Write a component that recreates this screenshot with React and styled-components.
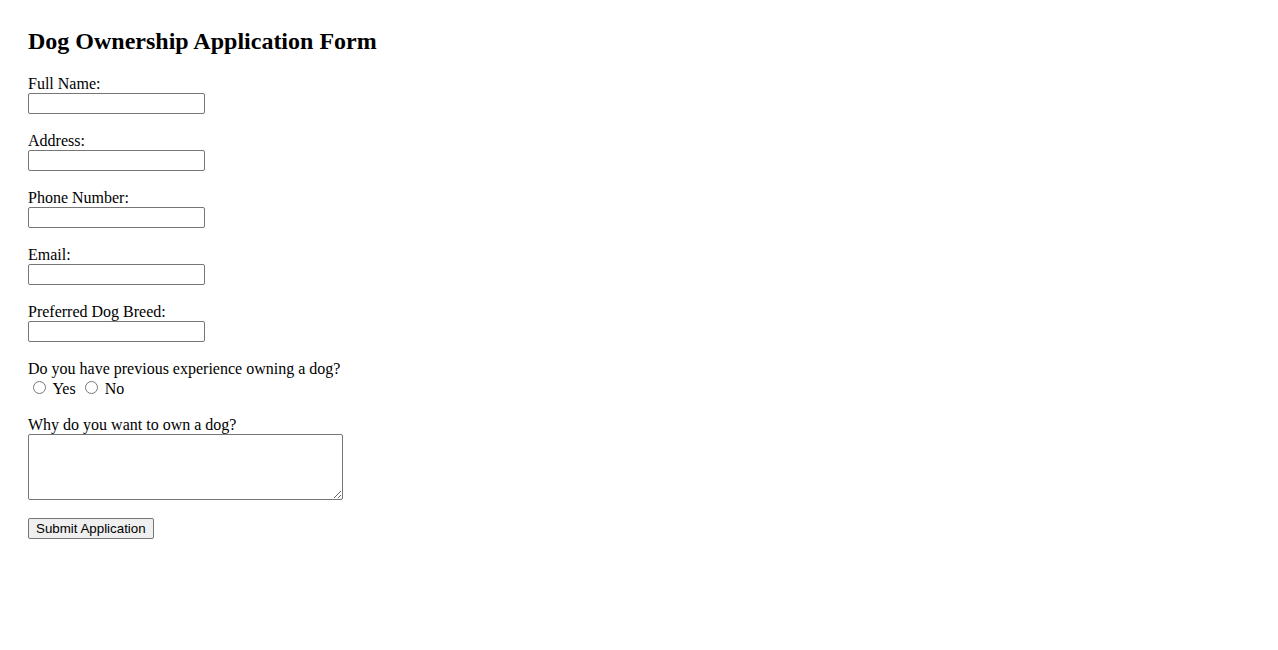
import React from 'react';
import styled, { createGlobalStyle } from 'styled-components';

const GlobalStyle = createGlobalStyle`
 body {
    margin: 8px;
    padding: 20px;
    font-family: "Liberation Serif", "Times New Roman", serif;
    font-size: 16px;
    color: #000;
    background: #fff;
 }
`;

const Heading = styled.h2`
 margin: 0 0 20px;
 font-size: 24px;
 font-weight: bold;
 line-height: 27px;
`;

const Form = styled.form`
 display: flex;
 flex-direction: column;
 align-items: flex-start;
`;

const Group = styled.div`
 display: flex;
 flex-direction: column;
 align-items: flex-start;
 margin-bottom: 18px;
`;

const Label = styled.label`
 display: block;
 line-height: 18px;
`;

const TextInput = styled.input`
 box-sizing: border-box;
 width: 177px;
 height: 21px;
 margin: 0;
 padding: 1px 2px;
 border: 1px solid #767676;
 border-radius: 2px;
 font-family: "Liberation Sans", Arial, sans-serif;
 font-size: 13.33px;
`;

const RadioRow = styled.div`
 line-height: 21px;
 height: 20px;
`;

const Radio = styled.input`
 width: 13px;
 height: 13px;
 margin: 3px 3px 0 5px;
 vertical-align: 0;
`;

const TextArea = styled.textarea`
 box-sizing: border-box;
 width: 315px;
 height: 66px;
 margin: 0;
 padding: 2px;
 border: 1px solid #767676;
 border-radius: 2px;
 font-family: "Liberation Mono", monospace;
 font-size: 13.33px;
`;

const Button = styled.button`
 box-sizing: border-box;
 height: 21px;
 padding: 1px 7px;
 margin: 0;
 background: #efefef;
 border: 1px solid #767676;
 border-radius: 2px;
 font-family: "Liberation Sans", Arial, sans-serif;
 font-size: 13.33px;
 color: #000;
`;

const fields = [
 { id: 'name', label: 'Full Name:' },
 { id: 'address', label: 'Address:' },
 { id: 'phone', label: 'Phone Number:' },
 { id: 'email', label: 'Email:' },
 { id: 'breed', label: 'Preferred Dog Breed:' },
];

export default function App() {
 return (
    <>
      <GlobalStyle />
      <Heading>Dog Ownership Application Form</Heading>
      <Form onSubmit={(e) => e.preventDefault()}>
        {fields.map((f) => (
          <Group key={f.id}>
            <Label htmlFor={f.id}>{f.label}</Label>
            <TextInput id={f.id} type="text" />
          </Group>
        ))}
        <Group>
          <Label>Do you have previous experience owning a dog?</Label>
          <RadioRow>
            <Radio type="radio" id="yes" name="experience" /> <label htmlFor="yes">Yes</label>{' '}
            <Radio type="radio" id="no" name="experience" /> <label htmlFor="no">No</label>
          </RadioRow>
        </Group>
        <Group>
          <Label htmlFor="why">Why do you want to own a dog?</Label>
          <TextArea id="why" />
        </Group>
        <Button type="submit">Submit Application</Button>
      </Form>
    </>
 );
}
